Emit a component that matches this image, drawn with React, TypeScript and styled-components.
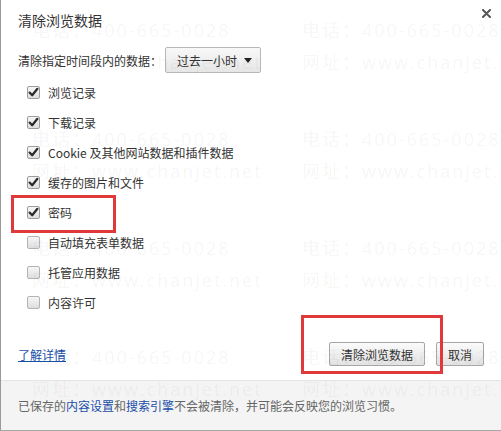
import React from "react";
import { styled, createGlobalStyle } from "styled-components";

const GlobalStyle = createGlobalStyle`
  html, body {
    margin: 0;
    padding: 0;
    background: #ffffff;
  }
  body {
    font-family: "Noto Sans CJK SC", "Noto Sans", sans-serif;
    color: #333333;
  }
`;

type Option = { label: string; checked: boolean };

const options: Option[] = [
  { label: "浏览记录", checked: true },
  { label: "下载记录", checked: true },
  { label: "Cookie 及其他网站数据和插件数据", checked: true },
  { label: "缓存的图片和文件", checked: true },
  { label: "密码", checked: true },
  { label: "自动填充表单数据", checked: false },
  { label: "托管应用数据", checked: false },
  { label: "内容许可", checked: false },
];

const CheckMark: React.FC = () => (
  <svg width="11" height="11" viewBox="0 0 11 11">
    <path d="M1.6 5.6 L4.2 8.3 L9.4 1.8" fill="none" stroke="#2a2a2a" strokeWidth="2.2" strokeLinecap="round" strokeLinejoin="round" />
  </svg>
);

const CloseIcon: React.FC = () => (
  <svg width="9" height="9" viewBox="0 0 9 9">
    <path d="M1 1 L8 8 M8 1 L1 8" stroke="#555" strokeWidth="2" strokeLinecap="round" />
  </svg>
);

const App: React.FC = () => {
  return (
    <>
      <GlobalStyle />
      <Dialog>
        <Body>
          <Header>
            <Title>清除浏览数据</Title>
            <CloseButton>
              <CloseIcon />
            </CloseButton>
          </Header>
          <TimeRow>
            <span>清除指定时间段内的数据：</span>
            <Select>
              过去一小时
              <Arrow />
            </Select>
          </TimeRow>
          <CheckList>
            {options.map((o) => (
              <CheckRow key={o.label}>
                <Box $checked={o.checked}>{o.checked && <CheckMark />}</Box>
                <span>{o.label}</span>
              </CheckRow>
            ))}
          </CheckList>
          <Actions>
            <Link>了解详情</Link>
            <Buttons>
              <Button>清除浏览数据</Button>
              <Button>取消</Button>
            </Buttons>
          </Actions>
        </Body>
        <Footer>
          已保存的<FooterLink>内容设置</FooterLink>和<FooterLink>搜索引擎</FooterLink>
          不会被清除，并可能会反映您的浏览习惯。
        </Footer>

        <Watermarks>
          {Array.from({ length: 8 }).map((_, i) => (
            <Mark key={i}>
              <div>电话：400-665-0028</div>
              <div>网址：www.chanjet.net</div>
            </Mark>
          ))}
        </Watermarks>

        <Highlight $left={10} $top={195} $width={105} $height={38} />
        <Highlight $left={300} $top={315} $width={142} $height={59} />
      </Dialog>
    </>
  );
};

export default App;

const Dialog = styled.div`
  position: relative;
  box-sizing: border-box;
  width: 501px;
  height: 431px;
  overflow: hidden;
  background: #ffffff;
  border-left: 1px solid #9a9a9a;
  border-bottom: 1px solid #a8a8a8;
  display: flex;
  flex-direction: column;
`;

const Body = styled.div`
  padding: 0 10px 0 17px;
  flex: 1;
`;

const Header = styled.div`
  height: 44px;
  display: flex;
  align-items: center;
  justify-content: space-between;
  margin-top: -2px;
`;

const Title = styled.h1`
  margin: 0;
  font-size: 14px;
  font-weight: 400;
  color: #333333;
`;

const CloseButton = styled.div`
  display: flex;
  align-self: flex-start;
  margin-top: 11px;
`;

const TimeRow = styled.div`
  display: flex;
  align-items: center;
  gap: 3px;
  height: 26px;
  margin-top: 5px;
  font-size: 12px;
  color: #333333;
`;

const Select = styled.div`
  position: relative;
  box-sizing: border-box;
  width: 96px;
  height: 26px;
  padding-left: 11px;
  display: flex;
  align-items: center;
  border: 1px solid #b8b8b8;
  border-radius: 2px;
  background: linear-gradient(#f8f8f8, #e6e6e6);
  font-size: 12px;
  color: #333333;
`;

const Arrow = styled.span`
  position: absolute;
  right: 8px;
  top: 10px;
  border-left: 4px solid transparent;
  border-right: 4px solid transparent;
  border-top: 5px solid #222222;
`;

const CheckList = styled.div`
  display: flex;
  flex-direction: column;
  margin-top: 4px;
  padding-left: 9px;
`;

const CheckRow = styled.div`
  display: flex;
  align-items: center;
  gap: 8px;
  height: 30px;
  font-size: 12px;
  color: #333333;
`;

const Box = styled.span<{ $checked: boolean }>`
  box-sizing: border-box;
  width: 13px;
  height: 13px;
  border: 1px solid ${(p) => (p.$checked ? "#9c9c9c" : "#b4b4b4")};
  border-radius: 2px;
  background: linear-gradient(#f6f6f6, #dedede);
  display: flex;
  align-items: center;
  justify-content: center;
`;

const Actions = styled.div`
  display: flex;
  align-items: center;
  justify-content: space-between;
  height: 24px;
  margin-top: 25px;
`;

const Link = styled.span`
  font-size: 12px;
  color: #1a4fa8;
  text-decoration: underline;
`;

const Buttons = styled.div`
  display: flex;
  gap: 11px;
  margin-right: 7px;
`;

const Button = styled.button`
  box-sizing: border-box;
  height: 24px;
  padding: 0 11px;
  border: 1px solid #a6a6a6;
  border-radius: 2px;
  background: linear-gradient(#fbfbfb, #e2e2e2);
  font-family: "Noto Sans CJK SC", sans-serif;
  font-size: 12px;
  color: #333333;
`;

const Footer = styled.div`
  height: 49px;
  display: flex;
  align-items: center;
  padding-left: 17px;
  background: #f4f4f4;
  border-top: 1px solid #e4e4e4;
  font-size: 12px;
  color: #666666;
  white-space: nowrap;
`;

const FooterLink = styled.span`
  color: #1a4fa8;
`;

const Watermarks = styled.div`
  position: absolute;
  inset: 0;
  pointer-events: none;
  display: grid;
  grid-template-columns: 270px 270px;
  grid-auto-rows: 109px;
  padding: 14px 0 0 31px;
`;

const Mark = styled.div`
  font-family: "Open Sans", "Noto Sans CJK SC", sans-serif;
  font-size: 18px;
  line-height: 32px;
  letter-spacing: 2px;
  color: rgba(0, 0, 0, 0.055);
  white-space: nowrap;
`;

const Highlight = styled.div<{ $left: number; $top: number; $width: number; $height: number }>`
  position: absolute;
  left: ${(p) => p.$left}px;
  top: ${(p) => p.$top}px;
  width: ${(p) => p.$width}px;
  height: ${(p) => p.$height}px;
  box-sizing: border-box;
  border: 3px solid #e0393c;
  pointer-events: none;
`;
